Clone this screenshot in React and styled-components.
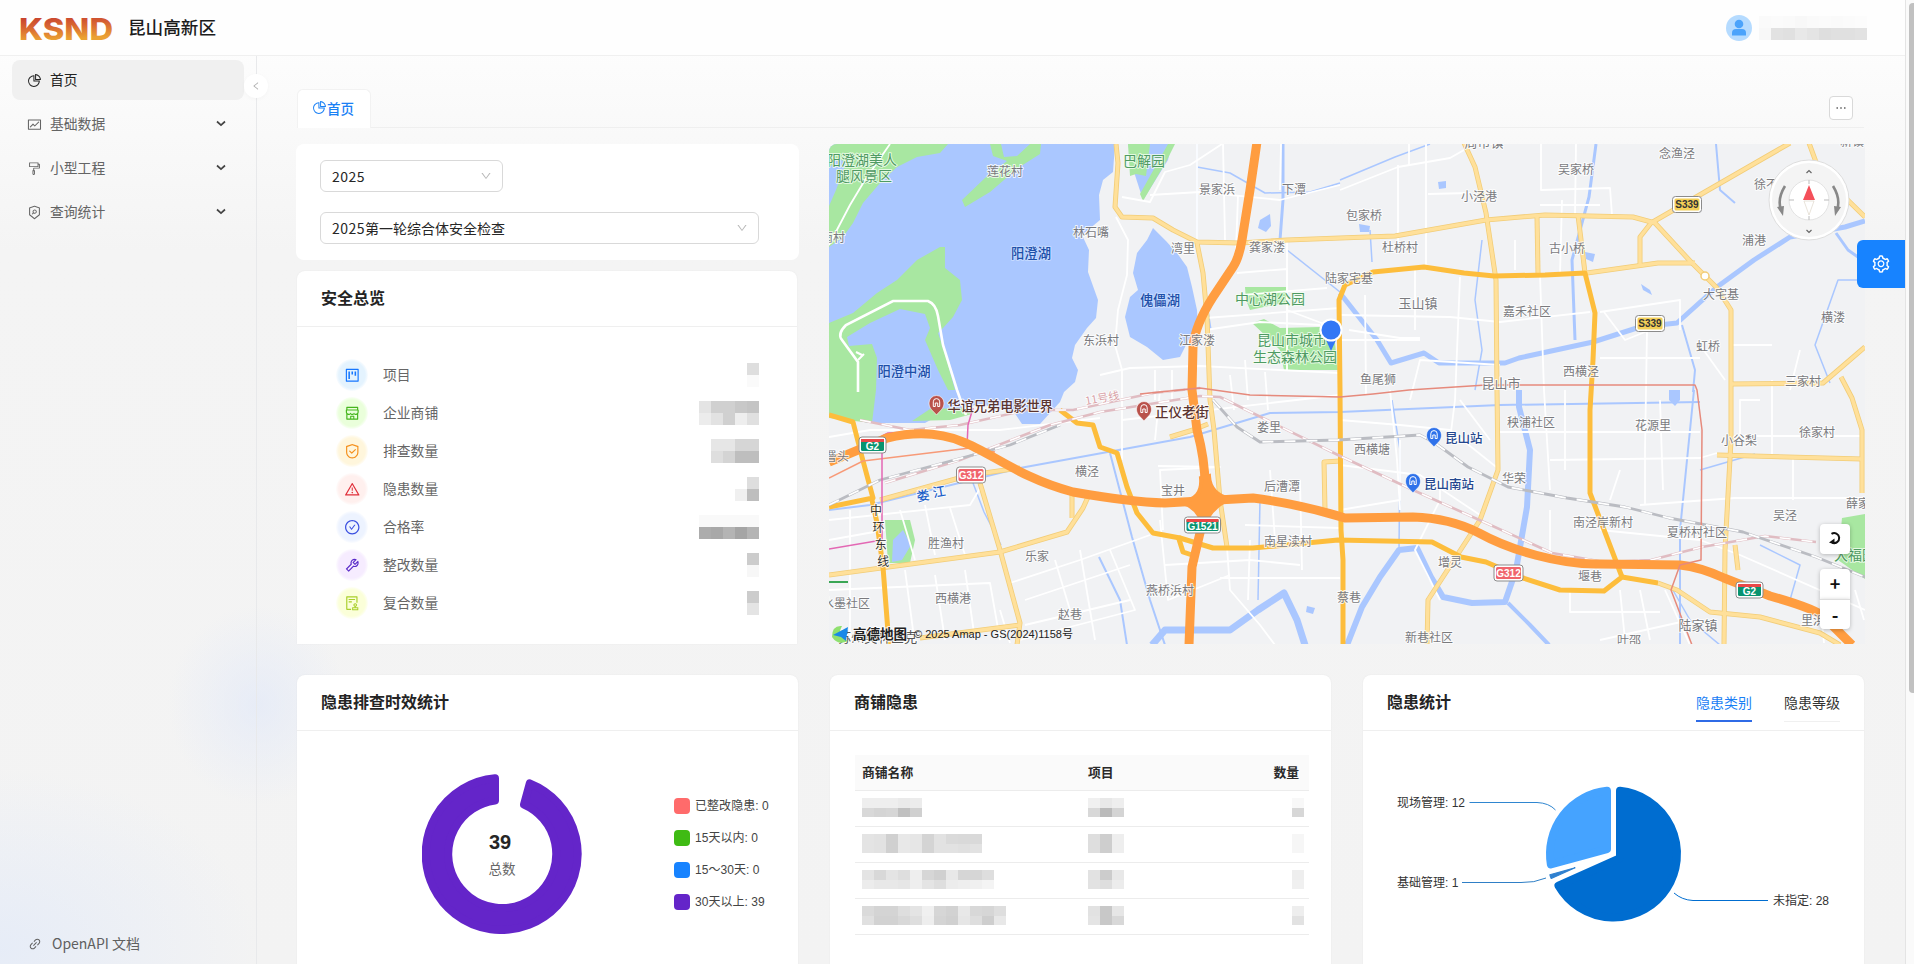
import React from "react";
import styled, { createGlobalStyle } from "styled-components";
import {
  AiOutlinePieChart,
  AiOutlineFund,
  AiOutlineFormatPainter,
  AiOutlineSecurityScan,
  AiOutlineProject,
  AiOutlineShop,
  AiOutlineSafety,
  AiOutlineWarning,
  AiOutlineCheckCircle,
  AiOutlineTool,
  AiOutlineAudit,
  AiOutlineSetting,
  AiOutlineLink,
  AiOutlineEllipsis,
  AiOutlineDown,
  AiOutlineLeft,
} from "react-icons/ai";

const Global = createGlobalStyle`
  * { box-sizing: border-box; }
  body {
    margin: 0;
    overflow: hidden;
    color: #222;
    font-family: "Noto Sans CJK SC", sans-serif;
    font-size: 14px;
  }
`;

/* ---------- shell ---------- */
const Page = styled.div`
  display: flex;
  width: 1914px;
  height: 964px;
  overflow: hidden;
`;
const Shell = styled.div`
  position: relative;
  display: flex;
  flex-direction: column;
  width: 1905px;
  height: 100%;
  background:
    radial-gradient(ellipse 90px 100px at 258px 705px, rgba(226, 233, 248, 0.7), transparent),
    radial-gradient(ellipse 260px 180px at 0 950px, rgba(228, 235, 248, 0.85), transparent),
    linear-gradient(#ffffff 0, #fbfbfb 90px, #f4f4f4 250px, #f3f3f3 100%);
`;
const ScrollTrack = styled.div`
  width: 9px;
  padding: 3px 0 0 3px;
  background: #fafafa;
  border-left: 1px solid #e4e4e4;
`;
const ScrollThumb = styled.div`
  height: 690px;
  background: #c1c1c1;
  border-radius: 4px 0 0 4px;
`;
const Header = styled.header`
  display: flex;
  align-items: center;
  flex: none;
  height: 56px;
  padding: 0 38px 0 20px;
  background: #fefefe;
  border-bottom: 1px solid #f0f0f0;
`;
const LogoSvg = styled.svg`
  overflow: visible;
`;
const AppTitle = styled.h1`
  flex: 1;
  margin: 0 0 0 15px;
  padding-bottom: 2px;
  font-size: 17.6px;
  font-weight: 500;
  line-height: 26px;
  color: #1c1c1c;
`;
const Avatar = styled.span`
  display: flex;
  margin-right: 7px;
`;
const Body = styled.div`
  display: flex;
  flex: 1;
  min-height: 0;
`;

/* ---------- sidebar ---------- */
const Sidebar = styled.aside`
  position: relative;
  display: flex;
  flex-direction: column;
  flex: none;
  width: 257px;
  padding: 4px 12px 0 12px;
  border-right: 1px solid #e8e9eb;
`;
const MenuItem = styled.div`
  display: flex;
  align-items: center;
  gap: 8px;
  height: 40px;
  margin-bottom: 4px;
  padding: 0 18px 0 15px;
  border-radius: 8px;
  font-size: 13.8px;
  color: ${(p) => (p.$active ? "#222" : "#646464")};
  background: ${(p) => (p.$active ? "#f0f0f0" : "transparent")};
  > svg { flex: none; }
  > span { flex: 1; padding-bottom: 2px; }
`;
const SidebarFooter = styled.div`
  display: flex;
  align-items: center;
  gap: 10px;
  height: 40px;
  margin-top: auto;
  padding-left: 16px;
  color: #5f5f5f;
  > span { padding-bottom: 2px; }
`;
const Collapse = styled.div`
  position: absolute;
  top: 18px;
  right: -12px;
  display: flex;
  align-items: center;
  justify-content: center;
  width: 24px;
  height: 24px;
  border-radius: 50%;
  background: #fff;
  box-shadow: 0 1px 4px rgba(0, 0, 0, 0.03);
  color: #aaa;
`;

/* ---------- main ---------- */
const Main = styled.main`
  flex: 1;
  padding: 33px 41px 0 40px;
  overflow: hidden;
`;
const TabBar = styled.div`
  display: flex;
  height: 39px;
`;
const PageTab = styled.div`
  display: flex;
  align-items: center;
  width: 74px;
  padding: 0 0 3px 14px;
  background: #fff;
  border: 1px solid #f2f2f2;
  border-bottom: 0;
  border-radius: 6px 6px 0 0;
  font-size: 13.5px;
  font-weight: 500;
  color: #1a80f5;
`;
const TabRest = styled.div`
  display: flex;
  flex: 1;
  justify-content: flex-end;
  padding: 7px 11px 0 0;
  border-bottom: 1px solid #efefef;
`;
const MoreButton = styled.button`
  display: flex;
  align-items: center;
  justify-content: center;
  width: 24px;
  height: 24px;
  padding: 0;
  border: 1px solid #d9d9d9;
  border-radius: 4px;
  background: #fff;
  color: #222;
`;
const TopRow = styled.section`
  display: flex;
  gap: 32px;
  height: 500px;
  margin: 16px -1px 31px 0;
`;
const LeftColumn = styled.div`
  display: flex;
  flex-direction: column;
  flex: none;
  gap: 11px;
  width: 500px;
`;
const Filters = styled.div`
  display: flex;
  flex-direction: column;
  gap: 20px;
  height: 116px;
  margin: 0 -2px 0 -1px;
  padding: 16px 24px;
  background: #fff;
  border-radius: 8px;
`;
const SelectBox = styled.div`
  display: flex;
  align-items: center;
  justify-content: space-between;
  width: ${(p) => p.$width}px;
  height: 32px;
  padding: 0 10px 1px 11px;
  border: 1px solid #d9d9d9;
  border-radius: 6px;
  color: #262626;
  font-size: 14px;
  svg { color: #b8b8b8; }
`;
const SelectYear = styled.span`
  letter-spacing: 0.5px;
`;
const Card = styled.div`
  display: flex;
  flex-direction: column;
  flex: 1;
  min-width: 0;
  background: #fff;
  border-radius: 8px 8px 0 0;
  box-shadow: 0 0 2px rgba(0, 0, 0, 0.06);
`;
const CardHead = styled.div`
  display: flex;
  align-items: center;
  justify-content: space-between;
  flex: none;
  height: 56px;
  padding: 0 24px;
  border-bottom: 1px solid #efefef;
`;
const CardTitle = styled.h2`
  margin: 0;
  padding-bottom: 3px;
  font-size: 16px;
  font-weight: 600;
  line-height: 24px;
  color: #242424;
`;
const Stats = styled.div`
  display: flex;
  flex-direction: column;
  padding: 29px 38px 0 39px;
`;
const StatRow = styled.div`
  display: flex;
  align-items: center;
  height: 38px;
`;
const StatIcon = styled.span`
  display: flex;
  align-items: center;
  justify-content: center;
  width: 32px;
  height: 32px;
  margin-right: 15px;
  border-radius: 50%;
  color: ${(p) => p.$color};
  background: radial-gradient(${(p) => p.$tint} 58%, transparent 74%);
`;
const StatLabel = styled.span`
  flex: 1;
  padding-bottom: 2px;
  font-size: 13.8px;
  color: #666;
`;
const Mosaic = styled.span`
  display: grid;
  grid-template-columns: repeat(${(p) => p.$cols}, 12px);
  grid-auto-rows: ${(p) => p.$h || 12}px;
`;
const Cell = styled.i`
  background: rgb(${(p) => `${p.$v}, ${p.$v}, ${p.$v}`});
`;
const BottomRow = styled.section`
  display: flex;
  gap: 32px;
  height: 320px;
`;

/* ---------- map ---------- */
const MapPanel = styled.div`
  position: relative;
  flex: 1;
  overflow: hidden;
  border-radius: 8px 0 0 0;
  background: #f1f2f4;
`;
const MapButtons = styled.div`
  position: absolute;
  right: 15px;
  bottom: 15px;
  display: flex;
  flex-direction: column;
  width: 30px;
`;
const MapButton = styled.div`
  display: flex;
  align-items: center;
  justify-content: center;
  height: 30px;
  padding-bottom: 2px;
  margin-bottom: ${(p) => p.$gap || 0}px;
  border-top: ${(p) => (p.$divided ? "1px solid #ddd" : "0")};
  border-radius: ${(p) => p.$radius || "4px"};
  background: #fff;
  box-shadow: 0 1px 4px rgba(0, 0, 0, 0.25);
  font-size: 18px;
  font-weight: 600;
  color: #111;
`;
const Settings = styled.div`
  position: absolute;
  right: 0;
  top: 240px;
  display: flex;
  align-items: center;
  justify-content: center;
  width: 48px;
  height: 48px;
  border-radius: 6px 0 0 6px;
  background: #1783ff;
  color: #fff;
`;

/* ---------- charts ---------- */
const DonutBody = styled.div`
  display: flex;
  align-items: center;
  padding: 43px 0 0 125px;
`;
const Legend = styled.ul`
  display: flex;
  flex-direction: column;
  gap: 16px;
  margin: 0 0 0 92px;
  padding: 0;
  list-style: none;
  font: 12px/16px "Liberation Sans", "Noto Sans CJK SC", sans-serif;
  letter-spacing: 0.05px;
  color: #444;
`;
const LegendItem = styled.li`
  display: flex;
  align-items: center;
  gap: 5px;
  height: 16px;
  white-space: nowrap;
  &::before {
    content: "";
    width: 16px;
    height: 16px;
    border-radius: 4px;
    background: ${(p) => p.$color};
  }
`;
const ChartSvg = styled.svg`
  display: block;
  font-family: "Liberation Sans", "Noto Sans CJK SC", sans-serif;
`;
const Table = styled.div`
  display: flex;
  flex-direction: column;
  margin: 24px 22px 0 25px;
`;
const TableRow = styled.div`
  display: grid;
  grid-template-columns: 226px 1fr auto;
  align-items: center;
  height: 36px;
  padding: 0 ${(p) => (p.$head ? 10 : 5)}px ${(p) => (p.$head ? 3 : 2)}px 7px;
  border-bottom: 1px solid #ececec;
  background: ${(p) => (p.$head ? "#fafafa" : "transparent")};
  font-size: 12.8px;
  font-weight: 600;
  color: #2a2a2a;
`;
const CardTabs = styled.div`
  display: flex;
  gap: 32px;
  align-self: flex-end;
  margin-bottom: 8px;
`;
const CardTab = styled.div`
  height: 31px;
  font-size: 14px;
  line-height: 20px;
  padding-top: 1px;
  color: ${(p) => (p.$active ? "#1a80f5" : "#333")};
  border-bottom: ${(p) => (p.$active ? "2px solid #2f6be6" : "1px solid #f0f0f0")};
`;

/* ---------- helpers ---------- */
function Blocks({ rows, h }) {
  return (
    <Mosaic $cols={rows[0].length} $h={h}>
      {rows.flat().map((v, i) => (
        <Cell key={i} $v={v} />
      ))}
    </Mosaic>
  );
}

const menu = [
  { label: "首页", Icon: AiOutlinePieChart, active: true },
  { label: "基础数据", Icon: AiOutlineFund },
  { label: "小型工程", Icon: AiOutlineFormatPainter },
  { label: "查询统计", Icon: AiOutlineSecurityScan },
];

const stats = [
  { label: "项目", Icon: AiOutlineProject, color: "#1677ff", tint: "#e4f3fe", rows: [[222], [250]] },
  { label: "企业商铺", Icon: AiOutlineShop, color: "#45b51d", tint: "#eaffdb", rows: [[228, 208, 208, 200, 196], [236, 226, 208, 238, 224]] },
  { label: "排查数量", Icon: AiOutlineSafety, color: "#f5901c", tint: "#fff6dc", rows: [[230, 230, 214, 214], [222, 212, 190, 190]] },
  { label: "隐患数量", Icon: AiOutlineWarning, color: "#e02f3a", tint: "#fff0ee", rows: [[255, 222], [240, 190]] },
  { label: "合格率", Icon: AiOutlineCheckCircle, color: "#3a4fe0", tint: "#edf3ff", rows: [[249, 249, 249, 249, 249], [172, 168, 180, 165, 180]] },
  { label: "整改数量", Icon: AiOutlineTool, color: "#5a2bc9", tint: "#f6ecff", rows: [[204], [247]] },
  { label: "复合数量", Icon: AiOutlineAudit, color: "#a9cf2a", tint: "#fbffd9", rows: [[204], [228]] },
];

const legend = [
  ["#ff6b6b", "已整改隐患: 0"],
  ["#3fbb14", "15天以内: 0"],
  ["#1783ff", "15～30天: 0"],
  ["#6425c9", "30天以上: 39"],
];

const tableRows = [
  [[[238, 238, 238, 234, 236], [216, 212, 214, 192, 208]], [[240, 232, 238], [216, 186, 212]], [[248], [215]]],
  [[[228, 226, 208, 232, 230, 212, 226, 218, 217, 217], [228, 226, 208, 232, 230, 212, 226, 226, 224, 226]], [[222, 206, 238], [222, 206, 238]], [[246], [246]]],
  [[[228, 216, 228, 222, 238, 214, 208, 232, 214, 214, 222], [236, 232, 232, 230, 238, 228, 222, 236, 238, 240, 244]], [[226, 204, 232], [226, 222, 236]], [[238], [240]]],
  [[[218, 212, 212, 222, 228, 240, 214, 210, 232, 216, 214, 222], [224, 210, 210, 216, 222, 238, 212, 208, 230, 222, 206, 232]], [[226, 200, 230], [228, 200, 216]], [[238], [226]]],
];

/* Pie sector with parallel gaps and rounded corners, angles in degrees clockwise from the top. */
function sector(cx, cy, r, from, to, gap, round) {
  const rad = Math.PI / 180;
  const d = gap / 2 + round;
  const R = r - round;
  const at = (deg, len) => [cx + Math.sin(deg * rad) * len, cy - Math.cos(deg * rad) * len];
  const apex = at((from + to) / 2, d / Math.sin(((to - from) / 2) * rad));
  const shift = Math.asin(d / R) / rad;
  const a = at(from + shift, R);
  const b = at(to - shift, R);
  const large = to - from > 180 ? 1 : 0;
  return `M${apex} L${a} A${R} ${R} 0 ${large} 1 ${b} Z`;
}

/* ---------- map data, in page coordinates ---------- */
const water = [
  "829,144 1115,144 1113,172 1103,180 1099,195 1100,220 1082,235 1089,250 1088,272 1098,300 1096,318 1087,328 1075,345 1072,358 1078,370 1075,382 1064,392 1060,402 1040,424 1022,424 1014,412 980,404 945,412 925,423 868,423 829,412",
  "1153,228 1166,241 1177,253 1187,267 1192,287 1197,310 1198,330 1190,337 1180,357 1163,360 1147,347 1130,337 1125,317 1130,297 1138,290 1133,273 1137,253 1147,240",
  "1128,144 1172,144 1168,160 1143,200 1134,172",
  "1669,390 1680,390 1680,400 1675,406 1669,400",
  "1641,284 1650,290 1652,295 1643,290",
  "1359,224 1370,226 1369,232 1360,232",
  "1260,220 1270,214 1271,226 1266,232 1258,228",
  "1438,182 1446,181 1446,188 1439,189",
  "1585,252 1595,254 1593,262 1586,259",
  "1307,606 1315,608 1313,614 1306,612",
];
const greens = [
  "829,144 948,144 940,153 917,157 897,167 880,183 863,203 853,223 843,237 829,247",
  "990,144 1001,144 1004,157 1017,156 1030,144 1041,144 1040,154 1018,168 990,192 965,207 962,200 985,178 1007,161 993,156",
  "945,247 945,268 960,280 962,300 953,317 943,328 938,333 944,350 955,390 948,390 938,370 925,340 930,328 925,314 900,309 870,323 847,337 849,346 872,344 877,358 876,390 872,423 829,418 829,323 853,313 877,293 897,280 917,260 940,247",
  "1128,144 1150,144 1146,176 1136,174 1130,176",
  "1168,144 1175,144 1167,160 1143,201 1140,194",
  "1245,287 1288,287 1288,302 1250,310 1246,300",
  "1252,323 1264,319 1280,328 1320,327 1335,343 1338,370 1284,370 1280,350 1267,337",
  "1842,518 1865,514 1865,579 1838,560",
  "885,520 910,520 915,540 910,563 888,563",
  "912,421 930,409 962,408 972,414 950,420",
];
const rivers = [
  [7, "1152,645 1165,630 1230,630 1258,610 1284,593 1297,620 1305,645"],
  [6, "1347,645 1362,607 1380,577 1399,550 1417,548 1431,577 1443,597 1472,603 1505,602 1516,570 1527,507 1530,450 1519,407 1519,390"],
  [4, "1508,603 1530,625 1549,645"],
  [5, "1865,221 1845,227 1790,237 1754,260 1717,287 1677,323 1640,327 1593,342 1519,358 1505,363 1439,363 1424,353 1391,363 1377,340 1340,293"],
  [3, "1596,144 1589,197 1572,260 1575,340"],
  [2, "829,510 870,505 1020,468 1190,437 1270,413 1340,412 1500,405 1700,402"],
  [2, "1110,453 1132,537 1150,600 1165,645"],
  [2, "1099,557 1120,600 1127,645"],
  [1.5, "1399,550 1400,450 1392,400"],
  [1.5, "1340,180 1395,157 1430,144"],
  [1.5, "1197,167 1230,173 1265,193 1310,192 1340,183"],
  [1.5, "1197,144 1197,240 1211,330"],
  [3, "1283,144 1283,200 1280,240"],
  [2, "1716,144 1720,190 1735,203"],
  [2, "1694,390 1688,450 1680,530 1680,645"],
  [1.5, "1670,585 1690,620 1720,645"],
  [2, "1682,325 1695,370 1693,392"],
  [1.5, "1260,500 1258,600"],
  [1.5, "1287,250 1340,292"],
  [1.5, "1865,280 1838,280 1815,345 1830,383"],
  [1.5, "973,483 984,512 1001,545"],
  [1.5, "1370,230 1372,262"],
  [1.5, "1700,470 1755,454"],
  [1.5, "1760,545 1800,565 1790,600"],
  [1.5, "1482,240 1475,300 1482,350 1475,390"],
  [3, "1836,233 1848,250 1865,262"],
];
const minor = [
  "829,245 850,205 865,180 890,144",
  "1116,217 1128,240 1127,275 1118,310 1115,345 1122,370 1122,460",
  "1122,197 1150,202 1165,172 1190,165 1222,144",
  "1150,195 1200,192 1280,200 1340,185",
  "1197,144 1197,245", "1223,144 1225,240", "1281,144 1280,190",
  "1238,195 1236,250 1230,275", "1237,273 1287,269 1287,320",
  "1287,240 1287,370", "1242,295 1327,288", "1205,318 1340,308",
  "1205,330 1260,322 1320,325", "1100,375 1130,368 1200,366 1340,373",
  "1155,370 1155,400", "1172,370 1172,400", "1122,420 1340,395",
  "829,437 870,430 1000,430 1100,418", "829,520 970,505 985,480",
  "925,505 935,555", "900,510 915,560", "950,508 965,555",
  "829,590 990,583 1000,640", "829,540 885,530", "850,510 850,640",
  "905,570 915,645", "935,575 945,640", "965,570 975,640",
  "1010,583 1080,560 1150,535", "1025,600 1130,565", "1025,625 1130,600",
  "1055,560 1070,610", "1080,550 1095,640", "1000,610 1010,643",
  "1110,550 1135,610 1020,640", "1160,520 1168,600 1230,575",
  "1158,466 1220,467 1160,470 1163,530", "1165,565 1250,560 1300,565",
  "1220,578 1340,578", "1227,547 1230,590 1260,625 1275,645",
  "1245,525 1340,528", "1270,470 1275,540", "1300,480 1302,570", "1250,540 1248,600",
  "1160,390 1155,440", "1340,190 1398,167 1450,158 1464,150",
  "1398,165 1398,245", "1409,144 1409,165", "1426,144 1426,270",
  "1541,144 1541,190 1610,188 1612,215", "1562,200 1560,275", "1576,144 1575,215",
  "1428,194 1470,193", "1515,240 1515,270", "1540,275 1544,390 1550,490",
  "1340,315 1450,317 1500,322 1590,312", "1415,270 1415,330", "1460,277 1455,400 1450,440",
  "1600,312 1680,300 1680,330", "1604,312 1625,340 1650,330", "1647,330 1645,450 1645,505",
  "1500,365 1420,360 1410,400", "1340,340 1420,340", "1600,358 1700,358", "1700,345 1725,380",
  "1731,345 1772,345", "1772,380 1772,455", "1600,205 1540,205",
  "1500,432 1700,432", "1550,460 1700,458 1717,453", "1640,505 1735,498 1865,498",
  "1793,455 1793,500", "1600,530 1700,540 1740,555 1865,610", "1731,436 1862,436",
  "1340,420 1400,425 1450,430 1500,470", "1390,390 1397,460 1400,510", "1340,465 1420,475 1480,515",
  "1340,510 1400,500 1400,440", "1440,480 1440,500 1415,550 1440,600", "1460,400 1490,440",
  "1550,510 1550,560", "1570,590 1570,612 1660,612", "1620,590 1625,640", "1640,590 1650,640",
  "1600,640 1690,620", "1665,590 1690,645", "1740,595 1800,603", "1565,390 1565,470",
  "1660,400 1663,490", "1620,470 1610,500", "1365,295 1366,395", "1349,330 1400,338 1420,338",
  "1855,590 1864,620", "1820,600 1824,643", "1740,440 1740,400 1760,400", "1800,350 1790,390",
  "1245,360 1248,400", "1265,372 1268,410", "1287,310 1340,330", "1230,375 1234,410",
];
const paleRoads = [
  "1116,144 1118,163 1115,207 1122,217 1153,218 1173,230 1197,242 1240,243 1287,240 1340,238 1395,236 1486,220 1545,215 1633,217 1655,223 1691,262 1717,288 1731,310 1731,440 1725,550 1724,645",
  "1197,243 1203,273 1207,317 1210,400 1214,430 1220,500 1227,547",
  "1464,143 1475,167 1486,213 1496,280 1497,390 1498,470 1480,520 1428,600 1427,645",
  "1537,216 1538,273", "1578,215 1585,273",
  "1790,143 1651,223 1640,237 1640,265", "1587,273 1658,263 1695,263",
  "1809,143 1820,173 1865,217", "1731,384 1823,383 1865,347",
  "1841,377 1852,398 1862,430 1862,493", "1717,455 1862,459",
  "880,500 970,475 1020,468", "1170,437 1193,430 1208,424",
  "980,483 1000,550 1020,623 1017,645", "829,575 1000,552 1067,532 1083,508 1088,497 1076,492",
  "1072,495 1072,518", "1325,510 1324,462 1340,461", "920,638 1020,625",
  "1658,583 1677,590 1710,612 1760,617 1820,633 1840,645", "1735,545 1738,570",
];
const deepRoads = [
  "1343,645 1343,560 1341,530 1340,390 1339,300 1345,285 1373,272 1424,267 1464,273 1494,276 1545,275 1585,273 1595,313 1593,360 1590,410 1590,493 1622,577",
  "1060,410 1077,423 1093,425 1100,447 1117,453 1127,487 1137,513 1153,533 1180,538 1213,548 1253,548 1338,540 1432,542 1461,557 1486,562 1523,578 1560,590 1604,591 1622,577 1658,583",
  "829,415 853,422 862,457 873,498 829,507",
  "872,500 877,523 883,567 889,645",
  "1178,536 1183,552 1195,556",
];
const highways = [
  "M1257 142L1250 190L1242 240Q1239 258 1233 267L1213 297Q1195 325 1193 347L1192 390L1197 430Q1205 460 1205 485L1203 520L1192 567L1189 645",
  "M829 462L887 438Q930 428 963 442C990 452 1020 478 1073 492Q1130 502 1165 503L1253 498Q1300 504 1345 518L1413 517Q1450 518 1479 533C1510 550 1560 565 1600 564L1680 565Q1700 567 1724 578L1770 596Q1816 609 1824 617L1852 645",
];
const railGray = [
  "1213,400 1237,427 1260,442 1338,440 1420,435 1435,443 1468,467 1508,487 1567,498 1625,507 1669,518 1743,532 1816,557 1865,577",
  "829,505 880,480 1010,445 1060,425",
];
const railPink = [
  "860,420 910,430 960,425 1027,410 1073,410 1153,393 1200,388",
  "885,483 960,460 1050,425 1100,412 1200,396 1220,397 1338,455 1413,490 1486,523 1552,553 1604,562 1651,560 1702,547 1765,536 1816,542",
];

const labels = [
  ["莲花村", 1005, 171], ["林石嘴", 1091, 232], ["景家浜", 1217, 189], ["下潭", 1294, 189],
  ["湾里", 1183, 248], ["龚家溇", 1267, 247], ["东浜村", 1101, 340], ["江家溇", 1197, 340],
  ["南村", 833, 237], ["吴家桥", 1576, 169], ["念渔泾", 1677, 153], ["小泾港", 1479, 196],
  ["包家桥", 1364, 215], ["杜桥村", 1400, 247], ["古小桥", 1567, 248], ["陆家宅基", 1349, 278],
  ["玉山镇", 1418, 303, 13], ["嘉禾社区", 1527, 311], ["大宅基", 1721, 294], ["浦港", 1754, 240],
  ["徐不桥", 1772, 184], ["横溇", 1833, 317], ["虹桥", 1708, 346], ["西横泾", 1581, 371],
  ["昆山市", 1501, 383, 13], ["鱼尾狮", 1378, 379], ["三家村", 1803, 381], ["周市镇", 1484, 142, 13],
  ["新镇", 1852, 141], ["娄里", 1269, 427], ["横泾", 1087, 471], ["宝井", 1173, 490],
  ["后漕潭", 1282, 486], ["南星渎村", 1288, 541], ["胜渔村", 946, 543], ["乐家", 1037, 556],
  ["西横港", 953, 598], ["赵巷", 1070, 614], ["燕桥浜村", 1170, 590], ["水墨社区", 846, 603],
  ["罾头", 837, 456], ["西横塘", 1372, 449], ["秧浦社区", 1531, 422], ["花源里", 1653, 425],
  ["小谷梨", 1739, 440], ["徐家村", 1817, 432], ["华荣", 1514, 478], ["南泾岸新村", 1603, 522],
  ["吴泾", 1785, 515], ["薛家", 1858, 503], ["夏桥村社区", 1697, 532], ["增灵", 1450, 562],
  ["堰巷", 1590, 576], ["蔡巷", 1349, 597], ["新巷社区", 1429, 637], ["叶邵", 1629, 640],
  ["陆家镇", 1698, 625, 13], ["里浜", 1813, 620],
];
const parks = [
  ["阳澄湖美人", 862, 160], ["腿风景区", 864, 176], ["巴解园", 1144, 161],
  ["中心湖公园", 1270, 299], ["昆山市城市", 1292, 340], ["生态森林公园", 1295, 357], ["大福园", 1834, 555, 14, "start"],
];
const lakes = [["阳澄湖", 1031, 254], ["傀儡湖", 1160, 301], ["阳澄中湖", 904, 372]];

const MapText = styled.text`
  font-family: "Noto Sans CJK SC", sans-serif;
  font-size: ${(p) => p.$size || 12}px;
  font-weight: ${(p) => p.$weight || 400};
  text-anchor: ${(p) => p.$anchor || "middle"};
  dominant-baseline: central;
  fill: ${(p) => p.$fill};
  stroke: ${(p) => p.$halo || "#ffffff"};
  stroke-width: 2px;
  stroke-opacity: 0.8;
  stroke-linejoin: round;
  paint-order: stroke;
`;
const ShieldText = styled.text`
  font-family: "Liberation Sans", sans-serif;
  font-size: 10px;
  font-weight: 700;
  text-anchor: middle;
`;

function Lines({ items, stroke, width, ...rest }) {
  return (
    <g fill="none" stroke={stroke} strokeWidth={width} strokeLinejoin="round" {...rest}>
      {items.map((p) => (
        <polyline key={p} points={p} />
      ))}
    </g>
  );
}

function Shield({ x, y, text, kind }) {
  const w = text.length > 4 ? 36 : text.length > 2 ? 29 : 27;
  const fill = kind === "national" ? "#08936f" : kind === "red" ? "#f0646c" : "#f3cf57";
  return (
    <g transform={`translate(${x} ${y})`}>
      <rect x={-w / 2} y="-8" width={w} height="16" rx="3" fill="#fff" stroke="#8b8b8b" />
      <rect x={-w / 2 + 2} y="-6" width={w - 4} height="12" rx="1.5" fill={fill} />
      {kind === "national" && <rect x={-w / 2 + 2} y="-6" width={w - 4} height="3" fill="#e84848" />}
      <ShieldText y={kind === "national" ? 5 : 3.7} fill={kind === "province" ? "#333" : "#fff"}>
        {text}
      </ShieldText>
    </g>
  );
}

function Poi({ x, y, color, label, textColor, size = 13.5 }) {
  return (
    <g transform={`translate(${x} ${y})`}>
      <path d="M0 10C-3 6-7.5 4-7.5-2A7.5 7.5 0 0 1 7.5-2C7.5 4 3 6 0 10Z" fill={color} stroke="#fff" strokeWidth=".6" />
      <path d="M-3.2 1.5V-3.2A3.2 3.2 0 0 1 3.2-3.2V1.5H1.2V-2H-1.2V1.5Z" fill="none" stroke="#fff" strokeWidth="1" />
      <MapText x="11" y="0" $anchor="start" $size={size} $fill={textColor} $weight={500}>
        {label}
      </MapText>
    </g>
  );
}

function AmapView() {
  return (
    <ChartSvg width="1036" height="500" viewBox="829 144 1036 500">
      <rect x="829" y="144" width="1036" height="500" fill="#f1f2f4" />
      {water.map((p) => <polygon key={p} points={p} fill="#aac7ff" />)}
      {greens.map((p) => <polygon key={p} points={p} fill="#a8e7a1" />)}
      <polygon points="829,168 838,158 846,163 836,190 829,206" fill="#aac7ff" />
      <polygon points="893,540 903,530 911,545 902,560 892,562" fill="#aac7ff" />
      <g fill="none" stroke="#aac7ff" strokeLinejoin="round">
        {rivers.map(([w, p]) => <polyline key={p} points={p} strokeWidth={w} />)}
      </g>
      <Lines items={minor} stroke="#ffffff" width={1.8} />
      <path d="M858 392L858 362L842 340Q837 334 846 325L893 301H928Q936 304 938 316L943 345L957 390L966 415" fill="none" stroke="#fff" strokeWidth="2.6" />
      <path d="M856 352L862 355M858 360L864 354" fill="none" stroke="#fff" strokeWidth="2" />
      <Lines items={paleRoads} stroke="#f2cd78" width={5} />
      <Lines items={paleRoads} stroke="#ffe09a" width={3.4} />
      <Lines items={deepRoads} stroke="#fdbd3c" width={5} />
      <Lines items={["829,478 863,461 970,448 995,452"]} stroke="#f79a78" width={1.4} />
      <Lines items={railPink} stroke="#e0bcc2" width={2.6} />
      <Lines items={railPink} stroke="#ffffff" width={1.6} strokeDasharray="11 11" />
      <Lines items={railGray} stroke="#babcc2" width={2.8} />
      <Lines items={railGray} stroke="#ffffff" width={1.8} strokeDasharray="11 11" />
      <Lines items={["829,549 882,540 882,436 888,433 925,431", "967,446 968,425 973,408"]} stroke="#e368b4" width={1.5} />
      <g fill="none" stroke="#ff9d40" strokeWidth="9" strokeLinejoin="round">
        {highways.map((d) => <path key={d} d={d} />)}
      </g>
      <path d="M1201 478Q1203 500 1180 502Q1202 508 1203 530Q1208 508 1230 499Q1210 494 1209 476Z" fill="#ff9d40" stroke="#ff9d40" strokeWidth="4" />
      <Lines
        items={["1140,394 1200,388 1250,395 1340,397 1373,394 1409,390 1424,389 1486,385 1695,385 1697,390 1702,430 1701,560 1680,565 1671,590 1692,645"]}
        stroke="#e68a7c"
        width={1.5}
      />
      <circle cx="1705" cy="276" r="4" fill="#fff" stroke="#f2cd78" strokeWidth="1.5" />
      <path d="M829 582H848" stroke="#3aa655" strokeWidth="2" />
      {labels.map(([t, x, y, s]) => <MapText key={t + x} x={x} y={y - 1} $size={s} $fill="#7a7a7e">{t}</MapText>)}
      {parks.map(([t, x, y, s, a]) => (
        <MapText key={t} x={x} y={y - 1.5} $size={s || 14} $anchor={a} $fill="#4f9a63" $halo="#f4fff2">{t}</MapText>
      ))}
      {lakes.map(([t, x, y]) => (
        <MapText key={t} x={x} y={y - 1.5} $size={13.3} $fill="#1d4fa8" $halo="#cfe0ff" $weight={500}>{t}</MapText>
      ))}
      <MapText x="923" y="495" $size="13" $fill="#1d5fc8" $weight={500} transform="rotate(-10 923 495)">娄</MapText>
      <MapText x="939" y="491" $size="13" $fill="#1d5fc8" $weight={500} transform="rotate(-10 939 491)">江</MapText>
      <MapText x="1102" y="397" $size="11" $fill="#d9a0a6" transform="rotate(-10 1102 397)">11号线</MapText>
      {["中", "环", "东", "线"].map((c, i) => (
        <MapText key={c} x={876 + i * 2.4} y={509 + i * 17} $size={12} $fill="#333">{c}</MapText>
      ))}
      <Shield x={872.5} y={445} text="G2" kind="national" />
      <Shield x={971} y={475} text="G312" kind="red" />
      <Shield x={1202.5} y={525} text="G1521" kind="national" />
      <Shield x={1687} y={204.5} text="S339" kind="province" />
      <Shield x={1650} y={323.5} text="S339" kind="province" />
      <Shield x={1508.5} y={573} text="G312" kind="red" />
      <Shield x={1749.5} y={590} text="G2" kind="national" />
      <Poi x={936.5} y={405} color="#b9524b" label="华谊兄弟电影世界" textColor="#5b3430" size={13.2} />
      <Poi x={1144} y={411} color="#b9524b" label="正仪老街" textColor="#5b3430" />
      <Poi x={1434} y={437} color="#2f72ea" label="昆山站" textColor="#24478f" size={12.5} />
      <Poi x={1413} y={483} color="#2f72ea" label="昆山南站" textColor="#24478f" size={12.5} />
      <path d="M1326 340L1331 351L1336 340Z" fill="#3377f5" />
      <circle cx="1331" cy="330" r="10.5" fill="#3377f5" stroke="#fff" strokeWidth="2" />
      <MapText x="838" y="636" $size="13.2" $anchor="start" $fill="#555">苏州奥林匹克</MapText>
      <path d="M832 637Q832 625 842 626Q836 636 848 641Q838 646 832 637Z" fill="#8fe06f" />
      <path d="M833 635L848 627L846 641L841 637Z" fill="#1788e8" />
      <MapText x="853" y="632.5" $size="13.5" $weight={700} $anchor="start" $fill="#222">高德地图</MapText>
      <text x="914" y="638" fontSize="11" fill="#222">© 2025 Amap - GS(2024)1158号</text>
      <g transform="translate(1809 200)">
        <circle r="40" fill="#fff" stroke="#ddd" />
        <circle r="37" fill="#f4f4f4" />
        <circle r="20" fill="#fff" stroke="#e3e3e3" />
        <path d="M0-15L6 0H-6Z" fill="#f4505a" />
        <path d="M0 15L5 1H-5Z" fill="#fff" stroke="#e2dcd0" strokeWidth=".8" />
        <path d="M-20 0h5M15 0h5M0-20v4M0 16v4" stroke="#bbb" />
        <path d="M-24-14Q-32-1-28 10M24-14Q32-1 28 10" fill="none" stroke="#888" strokeWidth="2.6" />
        <path d="M-32 7L-25 6L-26 16ZM32 7L25 6L26 16Z" fill="#888" />
        <path d="M-2.5-27L0-29.5L2.5-27M-2.5 30L0 32.5L2.5 30" fill="none" stroke="#666" strokeWidth="1.2" />
      </g>
    </ChartSvg>
  );
}

function Logo() {
  return (
    <LogoSvg width="93" height="32" viewBox="0 0 93 32">
      <defs>
        <linearGradient id="brand" x1="0" y1="0" x2="0.15" y2="1">
          <stop offset="0.15" stopColor="#c43a2e" />
          <stop offset="0.5" stopColor="#d96832" />
          <stop offset="0.85" stopColor="#eba233" />
        </linearGradient>
      </defs>
      <text
        x="-1"
        y="27.5"
        fontFamily="Inter, sans-serif"
        fontSize="29.5"
        fontWeight="800"
        textLength="94"
        lengthAdjust="spacingAndGlyphs"
        fill="url(#brand)"
      >
        KSND
      </text>
    </LogoSvg>
  );
}

export default function App() {
  return (
    <Page>
      <Global />
      <Shell>
        <Header>
          <Logo />
          <AppTitle>昆山高新区</AppTitle>
          <Avatar>
            <svg width="26" height="26" viewBox="0 0 26 26">
              <circle cx="13" cy="13" r="13" fill="#b5dbff" />
              <circle cx="13" cy="9" r="4.3" fill="#4ba3fb" />
              <path d="M6 20.5V18Q6 14 10 14H16Q20 14 20 18V20.5Z" fill="#4ba3fb" />
            </svg>
          </Avatar>
          <Blocks
            h={12}
            rows={[
              [250, 251, 250, 248, 250, 251, 250, 251, 252],
              [248, 226, 224, 232, 228, 222, 224, 224, 226],
            ]}
          />
        </Header>
        <Body>
          <Sidebar>
            {menu.map(({ label, Icon, active }) => (
              <MenuItem key={label} $active={active}>
                <Icon size={15} />
                <span>{label}</span>
                {!active && (
                  <svg width="10" height="8" viewBox="0 0 10 8">
                    <path d="M1 1.5L5 5.1L9 1.5" fill="none" stroke="#444" strokeWidth="1.7" />
                  </svg>
                )}
              </MenuItem>
            ))}
            <SidebarFooter>
              <AiOutlineLink size={14} />
              <span>OpenAPI 文档</span>
            </SidebarFooter>
            <Collapse>
              <AiOutlineLeft size={10} />
            </Collapse>
          </Sidebar>
          <Main>
            <TabBar>
              <PageTab>
                <AiOutlinePieChart size={15} />
                首页
              </PageTab>
              <TabRest>
                <MoreButton>
                  <AiOutlineEllipsis size={14} />
                </MoreButton>
              </TabRest>
            </TabBar>
            <TopRow>
              <LeftColumn>
                <Filters>
                  <SelectBox $width={183}>
                    <SelectYear>2025</SelectYear>
                    <AiOutlineDown size={12} />
                  </SelectBox>
                  <SelectBox $width={439}>
                    <span>
                      <SelectYear>2025</SelectYear>第一轮综合体安全检查
                    </span>
                    <AiOutlineDown size={12} />
                  </SelectBox>
                </Filters>
                <Card>
                  <CardHead>
                    <CardTitle>安全总览</CardTitle>
                  </CardHead>
                  <Stats>
                    {stats.map(({ label, Icon, color, tint, rows }) => (
                      <StatRow key={label}>
                        <StatIcon $color={color} $tint={tint}>
                          <Icon size={16.5} />
                        </StatIcon>
                        <StatLabel>{label}</StatLabel>
                        <Blocks rows={rows} />
                      </StatRow>
                    ))}
                  </Stats>
                </Card>
              </LeftColumn>
              <MapPanel>
                <AmapView />
                <MapButtons>
                  <MapButton $gap={15}>
                    <svg width="16" height="16" viewBox="0 0 16 16">
                      <path d="M4.5 3.8A5 5 0 1 1 5.2 12.6" fill="none" stroke="#111" strokeWidth="2" />
                      <path d="M7.5 8.5V14.5L2 12.5Z" fill="#111" />
                    </svg>
                  </MapButton>
                  <MapButton $radius="4px 4px 0 0">+</MapButton>
                  <MapButton $radius="0 0 4px 4px" $divided>
                    -
                  </MapButton>
                </MapButtons>
              </MapPanel>
            </TopRow>
            <BottomRow>
              <Card>
                <CardHead>
                  <CardTitle>隐患排查时效统计</CardTitle>
                </CardHead>
                <DonutBody>
                  <ChartSvg width="160" height="160" viewBox="-80 -80 160 160">
                    <path
                      d="M27.8 -70.6A76 76 0 1 1 -7 -75.7L-7 -53.5A54 54 0 1 0 22 -49.4Z"
                      fill="#6425c9"
                      stroke="#6425c9"
                      strokeWidth="8"
                      strokeLinejoin="round"
                    />
                    <text x="-2" y="-5" fontSize="20" fontWeight="600" textAnchor="middle" fill="#262626">39</text>
                    <text x="0" y="20" fontSize="13.5" textAnchor="middle" fill="#666">总数</text>
                  </ChartSvg>
                  <Legend>
                    {legend.map(([c, t]) => (
                      <LegendItem key={t} $color={c}>{t}</LegendItem>
                    ))}
                  </Legend>
                </DonutBody>
              </Card>
              <Card>
                <CardHead>
                  <CardTitle>商铺隐患</CardTitle>
                </CardHead>
                <Table>
                  <TableRow $head>
                    <span>商铺名称</span>
                    <span>项目</span>
                    <span>数量</span>
                  </TableRow>
                  {tableRows.map((cells, i) => (
                    <TableRow key={i}>
                      {cells.map((rows, j) => (
                        <Blocks key={j} rows={rows} h={9.5} />
                      ))}
                    </TableRow>
                  ))}
                </Table>
              </Card>
              <Card>
                <CardHead>
                  <CardTitle>隐患统计</CardTitle>
                  <CardTabs>
                    <CardTab $active>隐患类别</CardTab>
                    <CardTab>隐患等级</CardTab>
                  </CardTabs>
                </CardHead>
                <ChartSvg width="501" height="232" viewBox="1363 731 501 232">
                  <g strokeLinejoin="round">
                    <path d={sector(1613.5, 854, 67.5, 0, 245.9, 5, 4)} fill="#006dd0" stroke="#006dd0" strokeWidth="8" />
                    <path d={sector(1613.5, 854, 67.5, 245.9, 254.6, 5, 0.6)} fill="#2f80cf" stroke="#2f80cf" strokeWidth="1.2" />
                    <path d={sector(1613.5, 854, 67.5, 254.6, 360, 5, 4)} fill="#45a3ff" stroke="#45a3ff" strokeWidth="8" />
                  </g>
                  <g fill="none" strokeWidth="1">
                    <path d="M1469.5 802.5H1537Q1549 803 1555.5 810" stroke="#2f86d0" />
                    <path d="M1462 882.5H1521Q1534 883 1546 878" stroke="#2f7fc6" />
                    <path d="M1674 893Q1682 900 1693 900.5H1768" stroke="#006dd0" />
                  </g>
                  <g fontSize="12" fill="#333">
                    <text x="1397" y="807">现场管理: 12</text>
                    <text x="1397" y="887">基础管理: 1</text>
                    <text x="1773" y="905">未指定: 28</text>
                  </g>
                </ChartSvg>
              </Card>
            </BottomRow>
          </Main>
        </Body>
        <Settings>
          <AiOutlineSetting size={20} />
        </Settings>
      </Shell>
      <ScrollTrack>
        <ScrollThumb />
      </ScrollTrack>
    </Page>
  );
}
